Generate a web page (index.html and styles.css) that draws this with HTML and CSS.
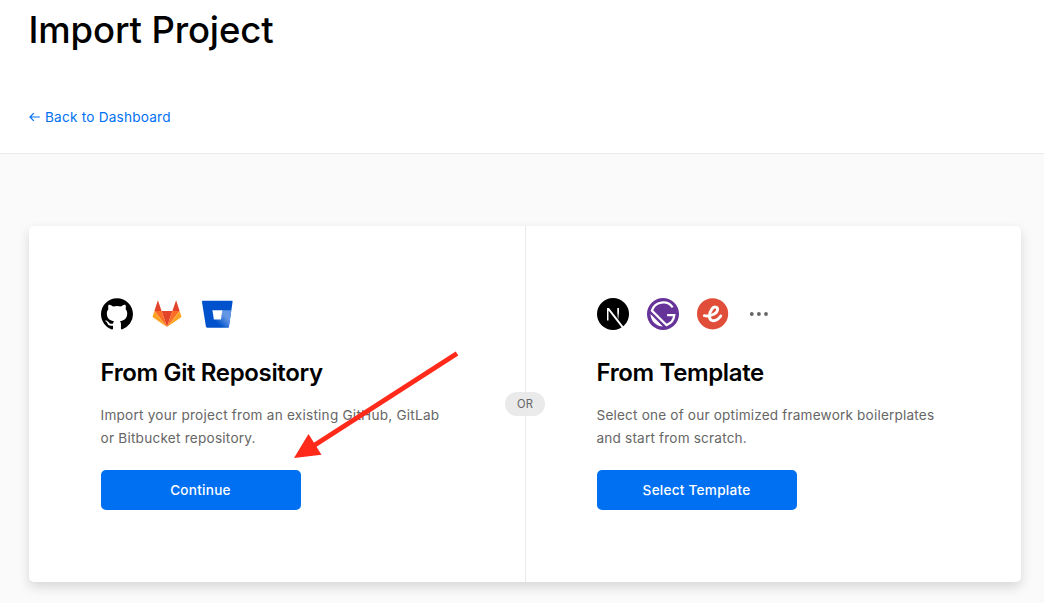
FILE: index.html
```html
<!DOCTYPE html>
<html lang="en">
<head>
<meta charset="utf-8">
<title>Import Project</title>
<link rel="stylesheet" href="styles.css">
</head>
<body>
<header class="header">
  <h1 class="title">Import Project</h1>
  <a class="back"><svg class="back-arrow" width="11" height="10" viewBox="0 0 11 10"><path d="M10.8 5H1.2M4.8 1.2L1 5l3.8 3.8"/></svg>Back to Dashboard</a>
</header>
<main class="main">
  <div class="card">
    <section class="option">
      <div class="icons">
        <svg width="32" height="32" viewBox="0 0 16 16"><path d="M8 .1C3.58.1 0 3.68 0 8.1c0 3.54 2.29 6.53 5.47 7.59.4.07.55-.17.55-.38 0-.19-.01-.82-.01-1.49-2.01.37-2.53-.49-2.69-.94-.09-.23-.48-.94-.82-1.13-.28-.15-.68-.52-.01-.53.63-.01 1.08.58 1.23.82.72 1.21 1.87.87 2.33.66.07-.52.28-.87.51-1.07-1.78-.2-3.64-.89-3.64-3.95 0-.87.31-1.59.82-2.15-.08-.2-.36-1.02.08-2.12 0 0 .67-.21 2.2.82A7.6 7.6 0 0 1 8 3.96c.68 0 1.36.09 2 .27 1.53-1.04 2.2-.82 2.2-.82.44 1.1.16 1.92.08 2.12.51.56.82 1.27.82 2.15 0 3.07-1.87 3.75-3.65 3.95.29.25.54.73.54 1.48 0 1.07-.01 1.93-.01 2.2 0 .21.15.46.55.38A8 8 0 0 0 16 8.1c0-4.42-3.58-8-8-8z"/></svg>
        <svg width="32" height="32" viewBox="0 0 32 32">
          <path fill="#e24329" d="M16 29L10.6 13h10.8zM6.9 2.3L10.6 13H3.4zM25.1 2.3L28.6 13h-7.2z"/>
          <path fill="#fc6d26" d="M16 29L3.4 13h7.2zM16 29l12.6-16h-7.2z"/>
          <path fill="#fca326" d="M3.4 13l-1.7 5.1c-.2.6 0 1 .4 1.3L16 29zM28.6 13l1.7 5.1c.2.6 0 1-.4 1.3L16 29z"/>
        </svg>
        <svg width="32" height="32" viewBox="0 0 32 32">
          <defs><linearGradient id="bucket" x1="31" y1="12" x2="17" y2="26" gradientUnits="userSpaceOnUse"><stop offset="0" stop-color="#5e94e6"/><stop offset=".45" stop-color="#6698e4"/><stop offset="1" stop-color="#0052cc"/></linearGradient></defs>
          <path fill="#0052cc" d="M2 2.8h28.6c.7 0 1.1.4 1 1L27.9 28.7c-.1.6-.5.9-1 .9H6.1c-.7 0-1.1-.4-1.2-1L1 3.9c-.1-.7.3-1.1 1-1.1z"/>
          <path fill="url(#bucket)" d="M30.3 12.3h-9l-1.3 9.2h-7l-7.3 7.8.8.3h20.4c.5 0 .9-.3 1-.9z"/>
          <path fill="#fff" d="M11.4 12.3h10L20 21.5h-7.1z"/>
        </svg>
      </div>
      <h2 class="heading git-heading">From Git Repository</h2>
      <p class="text">Import your project from an existing GitHub, GitLab<br>or Bitbucket repository.</p>
      <button class="button">Continue</button>
    </section>
    <section class="option option-template">
      <div class="icons">
        <svg width="32" height="32" viewBox="0 0 32 32">
          <defs><linearGradient id="stem" x1="0" y1="9" x2="0" y2="22" gradientUnits="userSpaceOnUse"><stop offset=".4" stop-color="#fff"/><stop offset="1" stop-color="#fff" stop-opacity=".1"/></linearGradient></defs>
          <circle cx="16" cy="16" r="16"/>
          <path fill="#fff" d="M10 10h2l14.4 18.6-1.5 1.1L11.5 12.4v10.2H10z"/>
          <path fill="url(#stem)" d="M20.3 10h1.7v12.4l-1.7-2.1z"/>
        </svg>
        <svg width="32" height="32" viewBox="0 0 32 32" fill="none">
          <circle cx="16" cy="16" r="16" fill="#663399"/>
          <path stroke="#fff" stroke-width="2.2" d="M25.7 9.4A11.8 11.8 0 0 0 4.9 12.6L19.4 27.1A11.6 11.6 0 0 0 27.3 17.2h-7.2"/>
          <path fill="#fff" d="M3.5 16.1L15.9 28.5C9.1 28.5 3.5 22.9 3.5 16.1z"/>
        </svg>
        <svg width="32" height="32" viewBox="0 0 32 32" fill="none">
          <circle cx="15.6" cy="15.8" r="15.6" fill="#e04e39"/>
          <path stroke="#fff" stroke-width="2.9" stroke-linecap="round" stroke-linejoin="round" d="M7.4 17.7c4.4 1.3 13.2-1.6 13.2-6.4 0-2.8-3.7-3-5.6-.4-2.9 3.8-3.9 11 .3 11.7 2.9.5 6.4-1.6 8.5-4.6"/>
        </svg>
        <svg width="22" height="32" viewBox="0 0 22 32" fill="#666"><circle cx="4.8" cy="16" r="1.9"/><circle cx="11.9" cy="16" r="1.9"/><circle cx="19" cy="16" r="1.9"/></svg>
      </div>
      <h2 class="heading">From Template</h2>
      <p class="text text-template">Select one of our optimized framework boilerplates<br>and start from scratch.</p>
      <button class="button">Select Template</button>
    </section>
    <span class="or">OR</span>
  </div>
</main>
<svg class="pointer" width="170" height="110" viewBox="0 0 170 110"><path d="M167 3.5L24 95.5" stroke="#ff2a1a" stroke-width="5"/><path fill="#ff2a1a" d="M4 108l14.5-24L31.5 104.8z"/></svg>
</body>
</html>
```
FILE: styles.css
```css
* { box-sizing: border-box; }
body {
  margin: 0;
  height: 603px;
  overflow: hidden;
  display: flex;
  flex-direction: column;
  position: relative;
  background: #fafafa;
  color: #000;
  font-family: Inter, "Liberation Sans", sans-serif;
}
.header {
  height: 154px;
  padding: 6px 29px 0 28.5px;
  background: #fff;
  border-bottom: 1px solid #eaeaea;
}
.title {
  margin: 0;
  font-size: 36.5px;
  line-height: 49px;
  font-weight: 450;
  letter-spacing: -.14px;
}
.back {
  display: flex;
  align-items: center;
  gap: 5.5px;
  margin-top: 51px;
  color: #0070f3;
  font-size: 13.6px;
  line-height: 22px;
  letter-spacing: .22px;
}
.back-arrow { fill: none; stroke: #0070f3; stroke-width: 1.2; }
.main { padding: 72px 23px 0 29px; }
.card {
  position: relative;
  display: grid;
  grid-template-columns: 496px 496px;
  height: 356px;
  border-radius: 5px;
  background: #fff;
  box-shadow: 0 5px 12px rgba(0, 0, 0, .14);
}
.option { padding: 72px 0 0 72px; }
.option-template { border-left: 1px solid #eaeaea; padding-left: 71px; }
.icons { display: flex; gap: 18px; height: 32px; }
.heading {
  margin: 24px 0 0 -.5px;
  font-size: 24px;
  line-height: 38px;
  font-weight: 600;
  letter-spacing: -.36px;
}
.text {
  margin: 12px 0 0 -.5px;
  color: #666;
  font-size: 13.6px;
  line-height: 23px;
  letter-spacing: .23px;
  white-space: nowrap;
}
.text-template { letter-spacing: .18px; }
.button {
  display: block;
  width: 200px;
  height: 40px;
  margin-top: 20px;
  padding: 0 1px 0 0;
  border: 0;
  border-radius: 5px;
  background: #0070f3;
  color: #fff;
  font: 500 13.6px/40px Inter, "Liberation Sans", sans-serif;
  letter-spacing: .24px;
}
.or {
  position: absolute;
  left: 476px;
  top: 166px;
  width: 40px;
  height: 24px;
  border-radius: 12px;
  background: #eaeaea;
  color: #666;
  font-size: 11.2px;
  font-weight: 400;
  line-height: 24px;
  text-align: center;
}
.pointer { position: absolute; left: 290px; top: 350px; }
```
